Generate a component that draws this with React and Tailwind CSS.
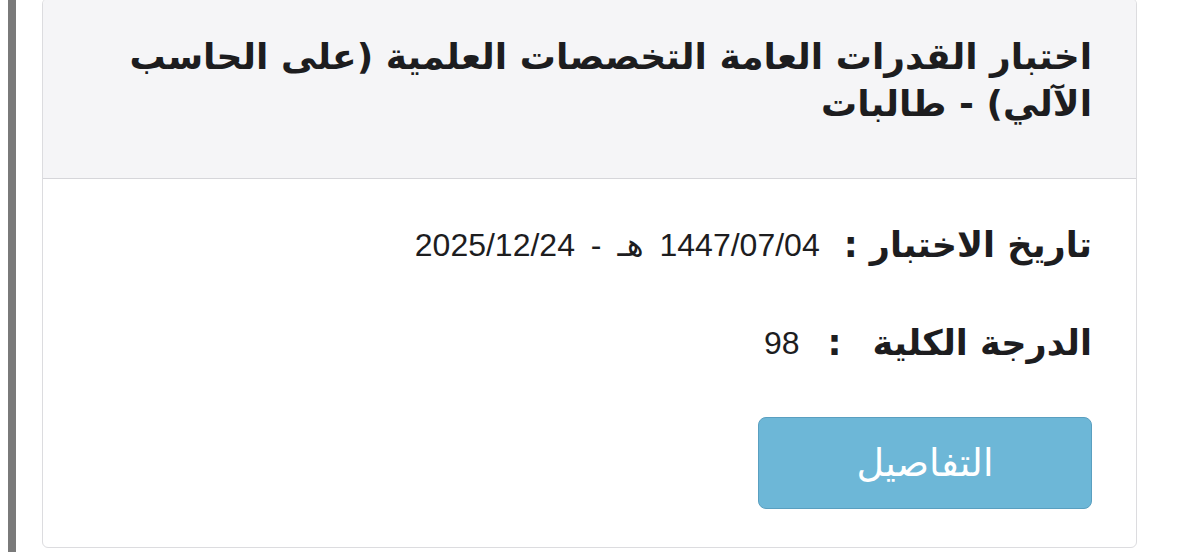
export default function App() {
  const arabic = { fontFamily: '"DejaVu Sans", sans-serif' };
  const latin = { fontFamily: '"Liberation Sans", "DejaVu Sans", sans-serif' };
  return (
    <div className="flex h-[552px] w-[1179px] overflow-hidden bg-white" dir="ltr">
      <div className="ml-2 h-full w-2 bg-[#7a7a7a]" />
      <div className="ml-[26px] mt-[-2px] flex h-[550px] w-[1095px] flex-col overflow-hidden rounded-md border border-[#dcdcdf] bg-white" dir="rtl">
        <div className="h-[180px] border-b border-[#d6d6da] bg-[#f5f5f7] pr-[44px] pl-6 pt-[34px]">
          <h2 className="text-[36px] font-bold leading-[47px] text-[#1d1d1f]" style={arabic}>
            اختبار القدرات العامة التخصصات العلمية (على الحاسب الآلي) - طالبات
          </h2>
        </div>
        <div className="flex flex-1 flex-col pr-[44px] pt-[46px]">
          <div className="flex h-[40px] items-center gap-6">
            <span className="text-[35px] font-bold text-[#1d1d1f]" style={arabic}>
              تاريخ الاختبار :
            </span>
            <span className="text-[32px] text-[#1d1d1f] [word-spacing:7px]" style={latin}>
              1447/07/04 هـ - 2025/12/24
            </span>
          </div>
          <div className="mt-[58px] flex h-[40px] items-center gap-7">
            <span className="flex items-center text-[35px] font-bold text-[#1d1d1f]" style={arabic}>
              <span>الدرجة الكلية</span>
              <span className="mr-[31px]">:</span>
            </span>
            <span className="text-[32px] text-[#1d1d1f]" style={latin}>
              98
            </span>
          </div>
          <button className="mt-[54px] flex h-[92px] w-[334px] items-center justify-center rounded-lg border border-[#5a9fc0] bg-[#6db7d7] text-[38px] text-white" style={arabic}>
            التفاصيل
          </button>
        </div>
      </div>
    </div>
  );
}
